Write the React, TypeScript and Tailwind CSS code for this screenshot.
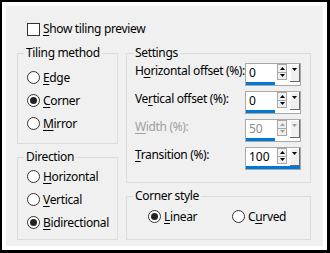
import React from 'react';

const font = { fontFamily: '"Noto Sans", "Liberation Sans", sans-serif' };

function Radio({ checked }: { checked?: boolean }) {
  return (
    <span className="flex h-[13px] w-[13px] shrink-0 items-center justify-center rounded-full border border-[#333333] bg-white">
      {checked && <span className="h-[7px] w-[7px] rounded-full bg-[#222222]" />}
    </span>
  );
}

function Key({ children }: { children: React.ReactNode }) {
  return <span className="underline decoration-1 underline-offset-[2px]">{children}</span>;
}

function RadioRow({ checked, children }: { checked?: boolean; children: React.ReactNode }) {
  return (
    <div className="flex h-[23px] items-center">
      <Radio checked={checked} />
      <span className="ml-[3px] whitespace-nowrap leading-4">{children}</span>
    </div>
  );
}

function Triangle({ up, disabled }: { up?: boolean; disabled?: boolean }) {
  const fill = disabled ? '#a0a0a0' : '#000000';
  return (
    <svg width="5" height="3" viewBox="0 0 5 3">
      {up ? <polygon points="2.5,0 5,3 0,3" fill={fill} /> : <polygon points="0,0 5,0 2.5,3" fill={fill} />}
    </svg>
  );
}

function SpinBox({ value, disabled, wide }: { value: string; disabled?: boolean; wide?: boolean }) {
  return (
    <div className="flex h-[23px] w-[56px] shrink-0 flex-col border border-[#a8a8a8] bg-white">
      <div className="flex flex-1">
        <div className={`w-[29px] pl-[3px] text-[12px] leading-[18px] tracking-normal ${disabled ? 'text-[#8a8a8a]' : 'text-black'}`}>
          {value}
        </div>
        <div className="ml-[2px] flex h-[16px] w-[10px] flex-col border border-[#a8a8a8] bg-[#f0f0f0]">
          <div className="flex flex-1 items-center justify-center border-b border-[#a8a8a8]">
            <Triangle up disabled={disabled} />
          </div>
          <div className="flex flex-1 items-center justify-center">
            <Triangle disabled={disabled} />
          </div>
        </div>
        <div className="ml-[3px] flex h-[18px] w-[10px] items-start justify-center border-r border-b border-r-[#6a6a6a] border-b-[#6a6a6a] bg-[#f0f0f0] pt-[4px] shadow-[inset_1px_1px_0_#ffffff]">
          <Triangle disabled={disabled} />
        </div>
      </div>
      <div className={`h-[3px] bg-[#0078d7] ${wide ? 'w-full' : 'w-[29px]'}`} />
    </div>
  );
}

function SettingRow({ label, value, disabled, wide }: { label: React.ReactNode; value: string; disabled?: boolean; wide?: boolean }) {
  return (
    <div className="flex h-[23px] items-start">
      <span className={`w-[110px] whitespace-nowrap leading-4 ${disabled ? 'text-[#a0a0a0]' : ''}`}>{label}</span>
      <SpinBox value={value} disabled={disabled} wide={wide} />
    </div>
  );
}

function Group({ title, className, children }: { title: string; className: string; children: React.ReactNode }) {
  return (
    <fieldset className={`border border-[#dcdcdc] ${className}`}>
      <legend className="ml-[6px] px-[2px] leading-4">{title}</legend>
      {children}
    </fieldset>
  );
}

export default function App() {
  return (
    <div
      className="h-[253px] w-[330px] border-t-2 border-l-2 border-r-[3px] border-b-[3px] border-black text-[12px] tracking-[-0.35px] text-black"
      style={font}
    >
      <div className="h-full w-full border-4 border-white bg-[#f0f0f0]">
        {/* checkbox */}
        <div className="mt-[15px] flex h-4 items-center pl-[21px]">
          <span className="h-[13px] w-[13px] border border-[#333333] bg-white" />
          <span className="ml-[3px] leading-4">
            <Key>S</Key>how tiling preview
          </span>
        </div>

        <div className="mt-[8px] flex gap-[8px] pl-[11px]">
          <div className="flex w-[101px] flex-col gap-[5px]">
            <Group title="Tiling method" className="h-[99px]">
              <div className="pl-[9px] pt-[5px]">
                <RadioRow>
                  <Key>E</Key>dge
                </RadioRow>
                <RadioRow checked>
                  <Key>C</Key>orner
                </RadioRow>
                <RadioRow>
                  <Key>M</Key>irror
                </RadioRow>
              </div>
            </Group>
            <Group title="Direction" className="h-[91px]">
              <div className="pl-[9px]">
                <RadioRow>
                  <Key>H</Key>orizontal
                </RadioRow>
                <RadioRow>
                  <Key>V</Key>ertical
                </RadioRow>
                <RadioRow checked>
                  <Key>B</Key>idirectional
                </RadioRow>
              </div>
            </Group>
          </div>

          <div className="flex w-[185px] flex-col gap-[5px]">
            <Group title="Settings" className="h-[138px]">
              <div className="flex flex-col gap-[5px] pl-[8px] pt-[2px]">
                <SettingRow
                  label={
                    <>
                      H<Key>o</Key>rizontal offset (%):
                    </>
                  }
                  value="0"
                />
                <SettingRow
                  label={
                    <>
                      Ve<Key>r</Key>tical offset (%):
                    </>
                  }
                  value="0"
                />
                <SettingRow
                  label={
                    <>
                      <Key>W</Key>idth (%):
                    </>
                  }
                  value="50"
                  disabled
                />
                <SettingRow
                  label={
                    <>
                      <Key>T</Key>ransition (%):
                    </>
                  }
                  value="100"
                  wide
                />
              </div>
            </Group>
            <Group title="Corner style" className="h-[52px]">
              <div className="flex pl-[21px] pt-[1px]">
                <div className="w-[84px]">
                  <RadioRow checked>
                    <Key>L</Key>inear
                  </RadioRow>
                </div>
                <RadioRow>
                  C<Key>u</Key>rved
                </RadioRow>
              </div>
            </Group>
          </div>
        </div>
      </div>
    </div>
  );
}
